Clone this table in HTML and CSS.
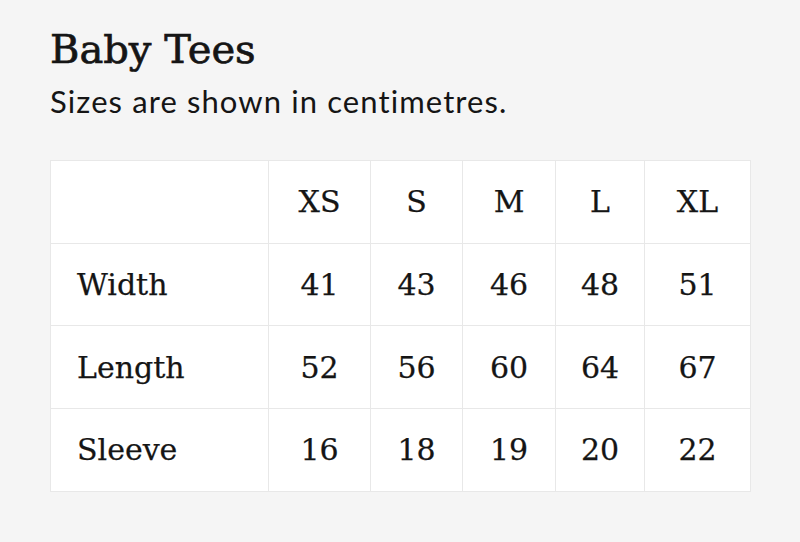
FILE: index.html
```html
<!DOCTYPE html>
<html lang="en">
<head>
<meta charset="utf-8">
<title>Baby Tees</title>
<link rel="stylesheet" href="styles.css">
</head>
<body>
<main class="page">
  <h1 class="title">Baby Tees</h1>
  <p class="subtitle">Sizes are shown in centimetres.</p>
  <table class="sizes">
    <colgroup>
      <col class="c-label">
      <col class="c-xs">
      <col class="c-s">
      <col class="c-m">
      <col class="c-l">
      <col class="c-xl">
    </colgroup>
    <thead>
      <tr><th></th><th>XS</th><th>S</th><th>M</th><th>L</th><th>XL</th></tr>
    </thead>
    <tbody>
      <tr><th class="row-label">Width</th><td>41</td><td>43</td><td>46</td><td>48</td><td>51</td></tr>
      <tr><th class="row-label">Length</th><td>52</td><td>56</td><td>60</td><td>64</td><td>67</td></tr>
      <tr><th class="row-label">Sleeve</th><td>16</td><td>18</td><td>19</td><td>20</td><td>22</td></tr>
    </tbody>
  </table>
</main>
</body>
</html>
```
FILE: styles.css
```css
html, body {
  margin: 0;
  padding: 0;
  background: #f5f5f5;
}
.page {
  padding: 25px 50px 0 50px;
  color: #151515;
}
.title {
  margin: 0;
  font-family: "DejaVu Serif", serif;
  font-weight: normal;
  font-size: 40px;
  line-height: 48px;
  -webkit-text-stroke: 0.7px #151515;
}
.subtitle {
  margin: 8px 0 0 0;
  font-family: Lato, "Liberation Sans", sans-serif;
  font-weight: 400;
  font-size: 31px;
  letter-spacing: 1.1px;
  line-height: 40px;
}
.sizes {
  margin-top: 39px;
  border-collapse: collapse;
  table-layout: fixed;
  width: 701px;
  background: #fff;
  font-family: "DejaVu Serif", serif;
  font-size: 30px;
}
.c-label { width: 218px; }
.c-xs { width: 102px; }
.c-s { width: 92px; }
.c-m { width: 93px; }
.c-l { width: 89px; }
.c-xl { width: 106px; }
.sizes th,
.sizes td {
  border: 1px solid #e8e8e8;
  height: 81.7px;
  padding: 0;
  text-align: center;
  font-weight: normal;
  vertical-align: middle;
  -webkit-text-stroke: 0.25px #151515;
}
.sizes .row-label {
  text-align: left;
  padding-left: 26px;
}
```
